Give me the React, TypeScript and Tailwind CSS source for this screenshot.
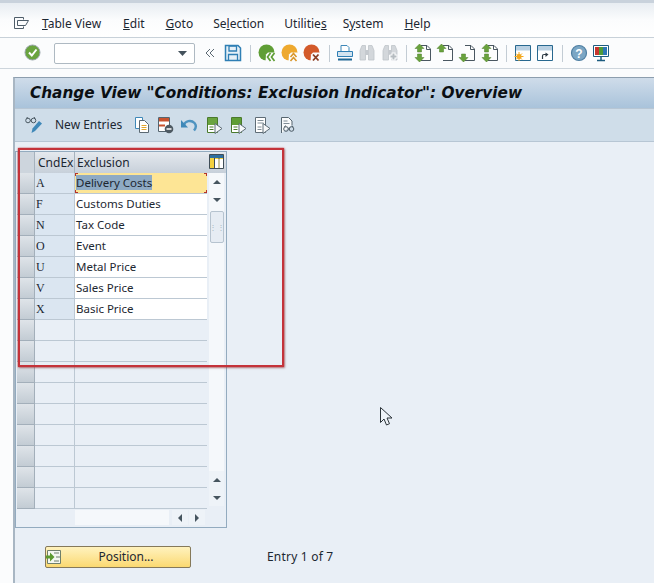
import type { ReactNode } from "react";

const ui = "font-['Noto_Sans','Liberation_Sans',sans-serif]";

function Ic({ children, className = "" }: { children: ReactNode; className?: string }) {
  return (
    <svg viewBox="0 0 18 18" width="18" height="18" fill="none" className={`shrink-0 ${className}`}>
      {children}
    </svg>
  );
}

const Sep = ({ className }: { className: string }) => <div className={`h-[17px] w-[1px] shrink-0 bg-[#c3ccd4] ${className}`} />;

// round status button with the white notch at the lower right
function Status({ color, children, className }: { color: string; children: ReactNode; className: string }) {
  return (
    <Ic className={className}>
      <circle cx="8.500" cy="8.500" r="8" fill={color} />
      <path d="M7.500 18 8 10.500 10 8.500h8V18z" fill="#fbfcfd" />
      {children}
    </Ic>
  );
}

function Binoculars({ plus, className }: { plus?: boolean; className: string }) {
  return (
    <Ic className={className}>
      <path d="M4 1.500h3.500v14.500H2V6.500zM10.500 1.500H14l2 5V16h-5.500z" fill="#d3d7db" stroke="#bfc4c9" strokeWidth="0.800" />
      <path d="M7.500 6h3v5h-3z" fill="#c4c9ce" />
      {plus && <path d="M12.500 8.500v8M8.500 12.500h8" stroke="#fbfcfd" strokeWidth="4" />}
      {plus && <path d="M12.500 9.500v6M9.500 12.500h6" stroke="#b5bbc0" strokeWidth="2" />}
    </Ic>
  );
}

function Page({ up, down, className }: { up?: boolean; down?: boolean; className: string }) {
  return (
    <Ic className={className}>
      <path d="M7 1.500h6l3.500 3.500v11.500H7" stroke="#4a5761" strokeWidth="1" fill="#fdfdfd" />
      <path d="M12.500 1.500v4h4" stroke="#4a5761" />
      {up && <path d="M5.500 0 10 4.500H7.500V8h-4V4.500H1z" fill="#69a23c" stroke="#4c7f2b" strokeWidth="0.500" />}
      {down && <path d="M5.500 18 10 13.500H7.500V10h-4v3.500H1z" fill="#69a23c" stroke="#4c7f2b" strokeWidth="0.500" />}
    </Ic>
  );
}

function DocGreen({ fill, className }: { fill: string; className: string }) {
  const plain = fill === "none";
  return (
    <Ic className={className}>
      <path d="M2.500 1.500h10v15h-10z" fill="#fff" stroke={plain ? "#5e6c76" : "#4a7a2c"} />
      {!plain && <path d="M3 2h9v7H3z" fill={fill} />}
      {plain && <path d="M4.500 4.500h6M4.500 7h6" stroke="#7f8c96" />}
      <path d="M4.500 11h4M4.500 13.500h4" stroke={plain ? "#7f8c96" : "#4a7a2c"} />
      <path d="M10 7.500 17 12.500l-7 5z" fill="#f6f8fa" stroke="#5e6c76" />
    </Ic>
  );
}

function Glasses({ x, y }: { x: number; y: number }) {
  return (
    <g stroke="#4b5963" strokeWidth="1" fill="none" transform={`translate(${x} ${y})`}>
      <circle cx="2.500" cy="3.500" r="2.300" />
      <circle cx="8" cy="3.500" r="2.300" />
      <path d="M4.800 3.500h1M1 1.500 2 0M9.500 1.500 8.500 0" />
    </g>
  );
}

const rows = [
  ["A", "Delivery Costs"],
  ["F", "Customs Duties"],
  ["N", "Tax Code"],
  ["O", "Event"],
  ["U", "Metal Price"],
  ["V", "Sales Price"],
  ["X", "Basic Price"],
  ...Array.from({ length: 9 }, () => ["", ""]),
];

const menus: [string, string, string, string][] = [
  ["", "T", "able View", "ml-[13px]"],
  ["", "E", "dit", "ml-[22px]"],
  ["", "G", "oto", "ml-[21px]"],
  ["Se", "l", "ection", "ml-[20px]"],
  ["Utilitie", "s", "", "ml-[20px]"],
  ["S", "y", "stem", "ml-[16px]"],
  ["", "H", "elp", "ml-[21px]"],
];

const Tri = ({ dir }: { dir: "up" | "down" | "left" | "right" }) => {
  const d = { up: "M5 3 9 7H1z", down: "M5 7 9 3H1z", left: "M3 5 7 1v8z", right: "M7 5 3 1v8z" }[dir];
  return (
    <svg viewBox="0 0 10 10" width="10" height="10">
      <path d={d} fill="#46555f" />
    </svg>
  );
};

export default function App() {
  return (
    <div className={`${ui} relative flex h-[583px] w-[654px] flex-col overflow-hidden bg-[#fbfcfd] text-[12px] text-[#1c2731]`}>
      {/* menu bar */}
      <div className="flex h-[38px] items-center border-b border-[#c8d1d9] border-t-[3px] border-t-[#c9d2dc] bg-gradient-to-b from-[#e8edf2] via-[#fbfcfd] to-white pl-[14px] pt-[7px]">
        <svg viewBox="0 0 15 13" width="15" height="13" className="shrink-0">
          <path d="M.500.500h9v2M.500.500v11h9v-2M3.500 3.500h11l-3 5h-8z" fill="none" stroke="#4e5d69" />
        </svg>
        {menus.map(([a, u, b, m]) => (
          <span key={a + u + b} className={`${m} whitespace-nowrap`}>
            {a}
            <span className="underline">{u}</span>
            {b}
          </span>
        ))}
      </div>

      {/* system toolbar */}
      <div className="flex h-[31px] items-center border-b border-[#cdd5dc] bg-[#fbfcfd] pl-[24px]">
        <Ic>
          <circle cx="8.500" cy="8.500" r="7.500" fill="#6aa43f" stroke="#9aa5ac" strokeWidth="1" />
          <path d="M5 8.500 7.800 11.500 12.500 5.500" stroke="#fff" strokeWidth="2" />
        </Ic>
        <div className="ml-[12px] flex h-[21px] w-[141px] shrink-0 items-center justify-end rounded-[2px] border border-[#aeb9c2] bg-white pr-[7px]">
          <svg viewBox="0 0 9 5" width="9" height="5">
            <path d="M0 0h9L4.500 5z" fill="#44525c" />
          </svg>
        </div>
        <svg viewBox="0 0 10 10" width="10" height="10" className="ml-[10px] shrink-0">
          <path d="M5 1 1 5l4 4M9 1 5 5l4 4" fill="none" stroke="#5a6872" />
        </svg>
        <Ic className="ml-[9px]">
          <path d="M1.500 1.500h12.500l2.500 2.500v12.500h-15z" fill="#e6f0f7" stroke="#2f7fb5" strokeWidth="1.500" />
          <path d="M5 2h7.500v5H5zM4.500 16.500v-6h9v6" stroke="#2f7fb5" strokeWidth="1.300" />
        </Ic>
        <Sep className="ml-[8px]" />
        <Status color="#5f9e35" className="ml-[7px]">
          <path d="M12.500 9 9.500 13l3 4M16.500 9l-3 4 3 4" stroke="#5f9e35" strokeWidth="1.700" />
        </Status>
        <Status color="#eea92f" className="ml-[5px]">
          <path d="M9.500 13l3-3.500 3 3.500M9.500 17l3-3.500 3 3.500" stroke="#d9962a" strokeWidth="1.600" />
        </Status>
        <Status color="#d35a2a" className="ml-[4px]">
          <path d="M10 10.500l5.500 6M15.500 10.500l-5.500 6" stroke="#8a3d22" strokeWidth="1.800" />
        </Status>
        <Sep className="ml-[8px]" />
        <Ic className="ml-[6px]">
          <path d="M5 7V1.500h6l2 2V7" stroke="#3f88b8" fill="#fff" />
          <path d="M1.500 7.500h15v5h-15z" fill="#d3e4f0" stroke="#2f7fb5" />
          <path d="M2 15.500h14" stroke="#1f6794" strokeWidth="2" />
        </Ic>
        <Binoculars className="ml-[4px]" />
        <Binoculars plus className="ml-[5px]" />
        <Sep className="ml-[7px]" />
        <Page up down className="ml-[7px]" />
        <Page up className="ml-[4px]" />
        <Page down className="ml-[4px]" />
        <Page up down className="ml-[5px]" />
        <Sep className="ml-[7px]" />
        <Ic className="ml-[7px]">
          <path d="M1.500 1.500h15v15h-15z" fill="#fff" stroke="#28688f" />
          <path d="M2 2h14v4.500H2z" fill="#b9d0e2" />
          <circle cx="5" cy="12.500" r="2.500" fill="#f3a81f" />
          <path d="M5 8v9M.500 12.500h9M2 9.500l6 6M8 9.500l-6 6" stroke="#f3a81f" />
        </Ic>
        <Ic className="ml-[4px]">
          <path d="M1.500 1.500h15v15h-15z" fill="#fff" stroke="#28688f" />
          <path d="M2 2h14v4.500H2z" fill="#b9d0e2" />
          <path d="M6.500 15v-3c0-1 .5-1.500 1.500-1.500h2" stroke="#2f3b44" strokeWidth="1.200" />
          <path d="M9.500 8.500l3 2-3 2.500z" fill="#2f3b44" />
        </Ic>
        <Sep className="ml-[8px]" />
        <Ic className="ml-[7px]">
          <circle cx="9" cy="9" r="7.500" fill="#7ba6c4" stroke="#4f7fa2" strokeWidth="1.200" />
          <text x="9" y="13.500" textAnchor="middle" fontSize="12" fontWeight="700" fill="#fff" fontFamily="Liberation Sans">?</text>
        </Ic>
        <Ic className="ml-[4px]">
          <path d="M1.500 1.500h15v11h-15z" fill="#fff" stroke="#1d5c80" />
          <path d="M3 3h4v8H3z" fill="#c6352d" />
          <path d="M7 3h4v8H7z" fill="#4d9b3a" />
          <path d="M11 3h4v8h-4z" fill="#2d77b5" />
          <path d="M9 13v3M5 16.500h8" stroke="#1d5c80" strokeWidth="1.500" />
        </Ic>
      </div>

      <div className="flex min-h-0 flex-1 pl-[13px] pt-[8px]">
        <div className="flex min-w-0 flex-1 flex-col border-l-[2px] border-t border-[#a8b6c3] border-t-[#8d9eae] bg-[#e9eff6]">
          {/* title */}
          <div className="flex h-[30px] shrink-0 items-center bg-gradient-to-b from-[#cfdcea] to-[#a9c3db] pl-[15px] font-['DejaVu_Sans',sans-serif] text-[15.3px] font-bold italic text-[#0b0f13] whitespace-nowrap">
            Change View "Conditions: Exclusion Indicator": Overview
          </div>

          {/* application toolbar */}
          <div className="flex h-[34px] shrink-0 items-center border-y border-[#b7c6d4] bg-[#cfdde9] pl-[10px]">
            <Ic>
              <Glasses x={0.500} y={1} />
              <path d="M6.500 17l1-4.500 6.500-7.500 3 2.500-7 7.500z" fill="#3f88b8" />
            </Ic>
            <span className="ml-[12px] w-[66px] whitespace-nowrap">New Entries</span>
            <Ic className="ml-[12px]">
              <path d="M2.500 1.500h7v11h-7z" fill="#fff" stroke="#3f88b8" />
              <path d="M6.500 4.500h5l4 4v8h-9z" fill="#fff" stroke="#5a6872" />
              <path d="M8.500 9.500h5M8.500 11.500h5M8.500 13.500h5" stroke="#e4a62c" />
            </Ic>
            <Ic className="ml-[5px]">
              <path d="M2.500 1.500h11v14h-11z" fill="#fff" stroke="#56656f" />
              <path d="M3 2h10v3.500H3z" fill="#c9532f" />
              <path d="M3 8.500h6v2H3z" fill="#c9532f" />
              <circle cx="13" cy="13" r="4.300" fill="#4e5a63" />
              <path d="M10.500 13h5" stroke="#fff" strokeWidth="1.500" />
            </Ic>
            <Ic className="ml-[6px]">
              <path d="M4 9C5 5 11 3.500 14.500 7c2 2.200 1.500 5-.5 7.500" stroke="#4d93c0" strokeWidth="2.400" />
              <path d="M1 4 8 11.500H1z" fill="#3f88b8" />
            </Ic>
            <DocGreen fill="#6aa43f" className="ml-[7px]" />
            <DocGreen fill="#5f9e35" className="ml-[6px]" />
            <DocGreen fill="none" className="ml-[6px]" />
            <Ic className="ml-[7px]">
              <path d="M3.500 17V1.500h7l3.500 3.500v4" stroke="#56656f" fill="#f8fafb" />
              <path d="M5.500 5h4M5.500 7.500h6" stroke="#7f8c96" />
              <Glasses x={5.500} y={9.500} />
            </Ic>
          </div>

          {/* table control */}
          <div className="mt-[9px] flex h-[377px] w-[212px] shrink-0 flex-col border border-[#93abbf] pl-[1px]">
            <div className="flex h-[21px] shrink-0 bg-gradient-to-b from-[#e5e9ee] to-[#c7d0da] pr-[3px]">
              <div className="w-[18px] shrink-0 border-r border-[#a6b2bd] bg-[#cdd5dd]" />
              <div className="w-[40px] shrink-0 border-r border-[#a6b2bd] pl-[3px] leading-[21px]">CndEx</div>
              <div className="w-[132px] shrink-0 pl-[2px] leading-[21px]">Exclusion</div>
              <svg viewBox="0 0 15 15" width="15" height="15" className="ml-[2px] mt-[2px] shrink-0">
                <path d="M.500.500h14v14H.500z" fill="#f4d13d" stroke="#3f4d57" />
                <path d="M1 1h13v3H1z" fill="#2f6f9f" />
                <path d="M5.500 4v10M10 4v10" stroke="#3f4d57" />
                <path d="M6 5h3.500v9H6zM10.500 5H14v9h-3.500z" fill="#fff" />
              </svg>
            </div>
            <div className="flex min-h-0">
              <div className="w-[190px] shrink-0">
                {rows.map(([code, text], i) => {
                  const active = i === 0;
                  const filled = text !== "";
                  return (
                    <div key={i} className="flex h-[21px]">
                      <div className="w-[18px] shrink-0 border-b border-r border-[#a3afba] bg-gradient-to-b from-[#dfe4e9] to-[#c3ccd4]" />
                      <div className={`w-[40px] shrink-0 border-b border-r border-[#bcc8d3] pl-[1px] font-['Liberation_Serif',serif] leading-[20px] ${filled ? "bg-[#dbe6f1]" : ""}`}>
                        {code}
                      </div>
                      <div className={`relative w-[132px] shrink-0 border-b border-[#bcc8d3] pl-[1px] text-[11.5px] leading-[20px] ${active ? "bg-[#fde595]" : filled ? "bg-white" : ""}`}>
                        {active ? <span className="bg-[#8eaac4]">{text}</span> : text}
                        {active && (
                          <>
                            <span className="absolute left-0 top-0 h-[3px] w-[3px] border-l border-t border-[#b5332a]" />
                            <span className="absolute right-0 top-0 h-[3px] w-[3px] border-r border-t border-[#b5332a]" />
                            <span className="absolute bottom-0 left-0 h-[3px] w-[3px] border-b border-l border-[#b5332a]" />
                            <span className="absolute bottom-0 right-0 h-[3px] w-[3px] border-b border-r border-[#b5332a]" />
                          </>
                        )}
                      </div>
                    </div>
                  );
                })}
              </div>
              {/* vertical scrollbar */}
              <div className="ml-[2px] flex h-[333px] w-[15px] shrink-0 flex-col items-center bg-[#f5f8fb]">
                <div className="flex h-[18px] shrink-0 items-center justify-center"><Tri dir="up" /></div>
                <div className="flex h-[17px] shrink-0 items-center justify-center"><Tri dir="down" /></div>
                <div className="mt-[3px] flex h-[32px] w-[14px] shrink-0 items-center justify-center rounded-[2px] border border-[#b6c3cf] bg-[#e6ecf3] text-[8px] leading-none text-[#a9b6c2]">⋮⋮</div>
                <div className="flex-1" />
                <div className="flex h-[18px] w-full shrink-0 items-center justify-center bg-[#eef3f8]"><Tri dir="up" /></div>
                <div className="flex h-[17px] w-full shrink-0 items-center justify-center bg-[#eef3f8]"><Tri dir="down" /></div>
              </div>
            </div>
            {/* horizontal scrollbar */}
            <div className="ml-[58px] mt-[1px] flex h-[15px] w-[130px] items-center">
              <div className="h-full w-[94px] bg-[#f5f8fb]" />
              <div className="ml-[3px] flex h-full w-[16px] items-center justify-center bg-[#eef3f8]"><Tri dir="left" /></div>
              <div className="ml-[1px] flex h-full w-[16px] items-center justify-center bg-[#eef3f8]"><Tri dir="right" /></div>
            </div>
          </div>

          {/* footer */}
          <div className="ml-[30px] mt-[18px] flex items-center">
            <div className="relative flex h-[22px] w-[146px] shrink-0 items-center justify-center rounded-[2px] border border-[#85795a] bg-gradient-to-b from-[#fff2bd] to-[#fbd970] pl-[16px]">
              <svg viewBox="0 0 16 16" width="16" height="16" className="absolute left-0 top-[2px]">
                <path d="M1.500 1.500h13v13h-13z" fill="#f4f7ef" stroke="#6f7f6a" />
                <path d="M8 4h5M10 8h4M8 12h5" stroke="#6f7f6a" />
                <path d="M0 6.500h4V3.500L8.500 8 4 12.500v-3H0z" fill="#5c9a2f" />
              </svg>
              Position...
            </div>
            <span className="ml-[76px] whitespace-nowrap tracking-[0.2px]">Entry 1 of 7</span>
          </div>
        </div>
      </div>

      {/* annotation drawn over the table */}
      <div className="pointer-events-none absolute left-[18px] top-[148px] h-[219px] w-[266px] border-[2px] border-[#c4333a] shadow-[0_0_1.5px_#c4333a,1px_1px_2px_rgba(120,60,60,0.5)]" />

      {/* mouse pointer */}
      <svg viewBox="0 0 13 20" width="13" height="20" className="pointer-events-none absolute left-[380px] top-[407px]">
        <path d="M.500.500v15l3.500-3.500 2.500 6 3-1.300-2.500-5.700h5z" fill="#eef3f8" stroke="#2b3338" />
      </svg>
    </div>
  );
}
